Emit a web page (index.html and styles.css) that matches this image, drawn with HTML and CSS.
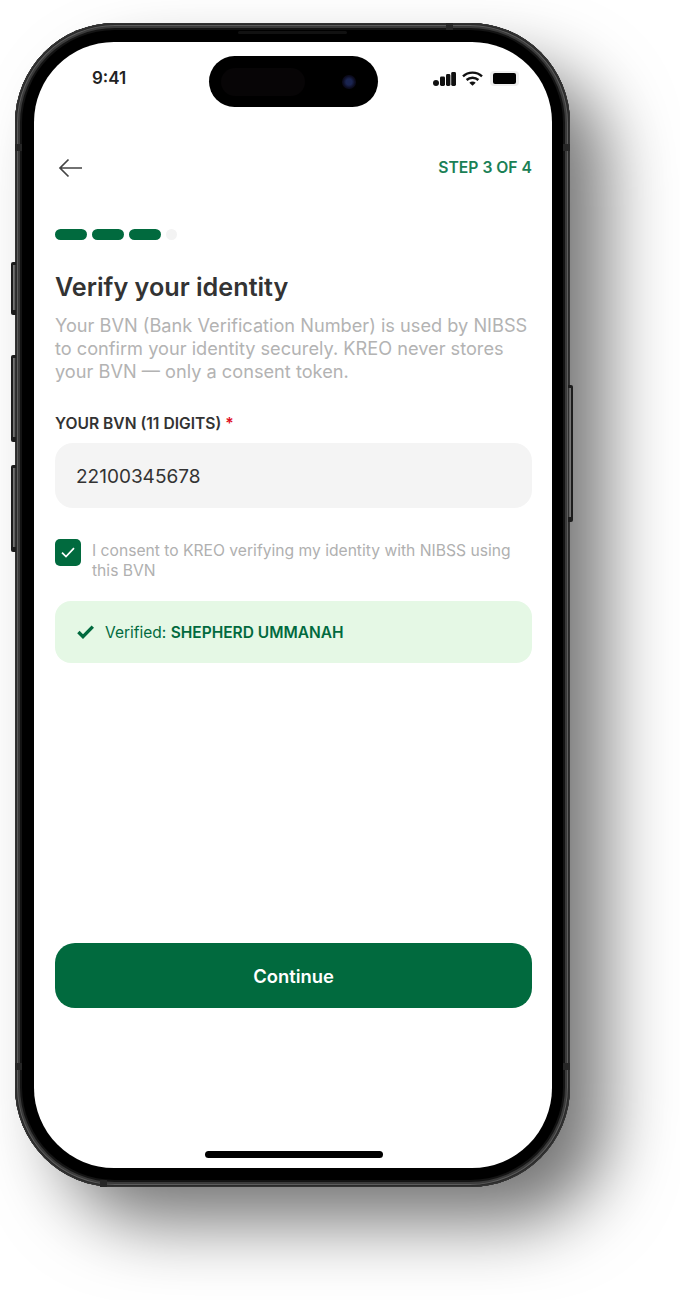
FILE: index.html
```html
<!DOCTYPE html>
<html lang="en">
<head>
    <meta charset="UTF-8">
    <meta name="viewport" content="width=device-width, initial-scale=1.0">
    <title>Verify your identity - KREO</title>
    <link rel="stylesheet" href="styles.css">
</head>
<body>
    <div class="phone">
        <span class="side-btn btn-mute"></span>
        <span class="side-btn btn-up"></span>
        <span class="side-btn btn-down"></span>
        <span class="side-btn btn-power"></span>
        <!-- antenna lines on the frame -->
        <span class="band band-left band-high"></span>
        <span class="band band-left band-low"></span>
        <span class="band band-right band-high"></span>
        <span class="band band-right band-low"></span>
        <span class="band band-top"></span>
        <span class="band band-bottom"></span>
        <span class="speaker"></span>
        <div class="screen">
            <div class="status-bar">
                <span class="time">9:41</span>
                <div class="island">
                    <span class="island-sensor"></span>
                    <span class="island-lens"></span>
                </div>
                <div class="status-icons">
                    <svg width="23" height="14" viewBox="0 0 23 14" fill="#111">
                        <circle cx="3" cy="11" r="3"/>
                        <rect x="7" y="4.4" width="5" height="9.6" rx="1.4"/>
                        <rect x="13" y="2" width="4.4" height="12" rx="1.4"/>
                        <rect x="18.2" y="0" width="4.8" height="14" rx="1.4"/>
                    </svg>
                    <svg width="21" height="15" viewBox="0 0 21 15" fill="none" stroke="#111" stroke-width="2.4">
                        <path d="M1 5.4c5.3-5 13.7-5 19 0"/>
                        <path d="M4.6 9c3.3-3 8.5-3 11.8 0"/>
                        <path d="M10.5 14.8l-3.2-3.1c1.8-1.5 4.6-1.5 6.4 0z" fill="#111" stroke="none"/>
                    </svg>
                    <div class="battery"><span class="battery-fill"></span></div>
                </div>
            </div>

            <div class="top-row">
                <svg class="back" width="25" height="20" viewBox="0 0 25 20" fill="none" stroke="#444" stroke-width="1.7">
                    <path d="M24 10H2M10.5 1.5L2 10l8.5 8.5"/>
                </svg>
                <span class="step">STEP 3 OF 4</span>
            </div>

            <div class="progress">
                <span class="seg"></span>
                <span class="seg"></span>
                <span class="seg"></span>
                <span class="seg seg-todo"></span>
            </div>

            <h1>Verify your identity</h1>
            <p class="intro">Your BVN (Bank Verification Number) is used by NIBSS to confirm your identity securely. KREO never stores your BVN — only a consent token.</p>

            <div class="label">YOUR BVN (11 DIGITS) <span class="req">*</span></div>
            <div class="input">22100345678</div>

            <div class="consent">
                <span class="checkbox">
                    <svg width="14" height="11" viewBox="0 0 14 11" fill="none" stroke="#fff" stroke-width="1.7">
                        <path d="M1 5.6l4 4L13 1.2"/>
                    </svg>
                </span>
                <span class="consent-text">I consent to KREO verifying my identity with NIBSS using this BVN</span>
            </div>

            <div class="verified">
                <svg width="17" height="14" viewBox="0 0 17 14" fill="none" stroke="#016a3e" stroke-width="3.4">
                    <path d="M1.4 7l4.6 4.6L15.8 1.6"/>
                </svg>
                <span>Verified: <strong>SHEPHERD UMMANAH</strong></span>
            </div>

            <div class="spacer"></div>
            <div class="continue">Continue</div>
            <div class="home-bar"></div>
        </div>
    </div>
</body>
</html>
```

FILE: styles.css
```css
html, body {
    height: 100%;
}
body {
    font-family: Inter, "Noto Sans", sans-serif;
    margin: 0;
    padding: 23px 0 0 15px;
    box-sizing: border-box;
    background-color: #fff;
    overflow: hidden;
}
.phone {
    position: relative;
    width: 555px;
    height: 1164px;
    box-sizing: border-box;
    padding: 19px 18px 19px 19px;
    background-color: #000;
    border-radius: 100px;
    box-shadow:
        inset 0 0 0 1px #333,
        inset 0 0 0 2px #2a2a2a,
        inset 0 0 0 3px #5c5c5c,
        inset 0 0 0 5px #3a3a3a,
        inset 0 0 0 7px #141414,
        40px 40px 70px -5px rgba(0, 0, 0, 0.55);
}
.side-btn {
    position: absolute;
    width: 5px;
    background: linear-gradient(to right, #1c1c1c 0 30%, #8a8a8a 55%, #444 80%, #1c1c1c);
    border-top: 3px solid #1c1c1c;
    border-bottom: 5px solid #1c1c1c;
    border-radius: 2px 0 0 2px;
    box-sizing: border-box;
}
.btn-mute {
    left: -4px;
    top: 239px;
    height: 53px;
}
.btn-up {
    left: -4px;
    top: 332px;
    height: 87px;
}
.btn-down {
    left: -4px;
    top: 442px;
    height: 87px;
}
.btn-power {
    right: -3px;
    top: 362px;
    height: 137px;
    background: linear-gradient(to left, #1c1c1c 0 30%, #8a8a8a 55%, #444 80%, #1c1c1c);
    border-radius: 0 2px 2px 0;
}
.band {
    position: absolute;
    background-color: #262626;
}
.band-left {
    left: 0;
    width: 7px;
    height: 7px;
}
.band-right {
    right: 0;
    width: 7px;
    height: 7px;
}
.band-high {
    top: 121px;
}
.band-low {
    top: 1040px;
}
.band-top {
    top: 0;
    left: 431px;
    width: 7px;
    height: 7px;
}
.band-bottom {
    bottom: 0;
    left: 85px;
    width: 7px;
    height: 7px;
}
.speaker {
    position: absolute;
    top: 8px;
    left: 223px;
    width: 109px;
    height: 3px;
    background-color: #111;
    border-radius: 2px;
}
.screen {
    display: flex;
    flex-direction: column;
    height: 100%;
    box-sizing: border-box;
    padding: 14px 20px 10px 21px;
    background-color: #fff;
    border-radius: 80px;
    color: #333;
}
.status-bar {
    display: grid;
    grid-template-columns: 1fr 169px 1fr;
    align-items: center;
    height: 51px;
    margin: 0 -1px;
}
.time {
    font-size: 17px;
    font-weight: 600;
    color: #222;
    padding-left: 38px;
    margin-top: -7px;
}
.island {
    display: flex;
    align-items: center;
    justify-content: space-between;
    height: 51px;
    padding: 0 22px 0 12px;
    box-sizing: border-box;
    background-color: #000;
    border-radius: 26px;
}
.island-sensor {
    width: 84px;
    height: 28px;
    background-color: #070506;
    border-radius: 14px;
}
.island-lens {
    width: 14px;
    height: 14px;
    background: radial-gradient(circle, #1a2450 0 30%, #0c0c20 60%, #080610 100%);
    border-radius: 50%;
}
.status-icons {
    display: flex;
    align-items: center;
    gap: 6px;
    padding-left: 55px;
    margin-top: -6px;
}
.battery {
    width: 29px;
    height: 15px;
    padding: 2px 3px;
    margin-left: 1px;
    box-sizing: border-box;
    border-radius: 4px;
    background-color: #eee;
}
.battery-fill {
    display: block;
    height: 100%;
    background-color: #000;
    border-radius: 2px;
}
.top-row {
    display: flex;
    align-items: center;
    justify-content: space-between;
    margin-top: 51px;
    height: 20px;
}
.back {
    margin-left: 3px;
}
.step {
    font-size: 15.7px;
    font-weight: 600;
    color: #1a8055;
    margin-top: -1px;
}
.progress {
    display: flex;
    gap: 5px;
    margin-top: 51px;
}
.seg {
    width: 32px;
    height: 11px;
    background-color: #016a3e;
    border-radius: 6px;
}
.seg-todo {
    width: 11px;
    background-color: #f3f3f3;
}
h1 {
    font-size: 25.2px;
    line-height: 32px;
    font-weight: 600;
    color: #333;
    margin: 31px 0 0;
}
.intro {
    font-size: 18.2px;
    line-height: 23px;
    color: #b3b3b3;
    margin: 11px 0 0;
}
.label {
    font-size: 15.6px;
    line-height: 18px;
    font-weight: 600;
    color: #333;
    margin-top: 32px;
}
.req {
    color: #e0101f;
}
.input {
    display: flex;
    align-items: center;
    height: 65px;
    box-sizing: border-box;
    margin-top: 10px;
    padding: 2px 0 0 21px;
    font-size: 19px;
    color: #333;
    background-color: #f4f4f4;
    border-radius: 18px;
}
.consent {
    display: flex;
    gap: 11px;
    margin-top: 31px;
}
.checkbox {
    display: flex;
    align-items: center;
    justify-content: center;
    flex: none;
    width: 26px;
    height: 27px;
    background-color: #016a3e;
    border-radius: 5px;
}
.consent-text {
    font-size: 15.65px;
    line-height: 20px;
    color: #b0b0b0;
    margin-top: 2px;
}
.verified {
    display: flex;
    align-items: center;
    gap: 11px;
    height: 62px;
    margin-top: 20px;
    padding-left: 22px;
    font-size: 15.5px;
    color: #016a3e;
    background-color: #e5f8e5;
    border-radius: 16px;
}
.verified strong {
    font-weight: 600;
}
.spacer {
    flex: 1;
}
.continue {
    display: flex;
    align-items: center;
    justify-content: center;
    height: 65px;
    font-size: 18.4px;
    font-weight: 600;
    color: #fff;
    background-color: #016a3e;
    border-radius: 20px;
}
.home-bar {
    width: 178px;
    height: 7px;
    margin: 143px auto 0;
    background-color: #000;
    border-radius: 4px;
}
```
